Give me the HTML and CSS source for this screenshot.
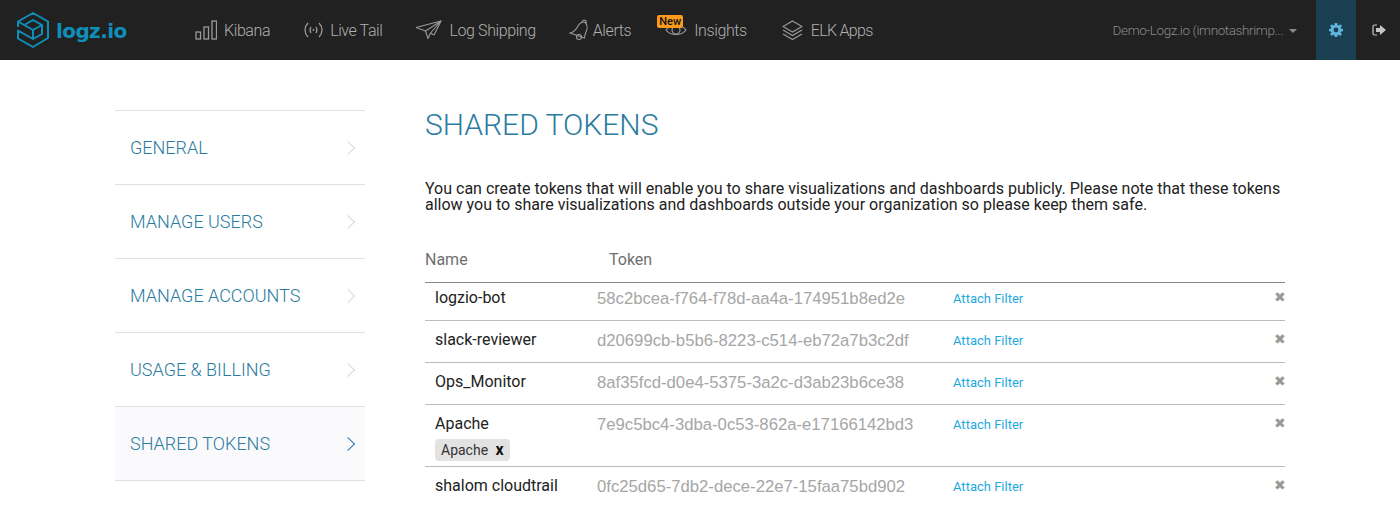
FILE: index.html
```html
<!DOCTYPE html>
<html lang="en">

<head>
    <meta charset="UTF-8">
    <meta name="viewport" content="width=device-width, initial-scale=1.0">
    <title>Shared Tokens</title>
    <link rel="stylesheet" href="styles.css">
</head>

<body>
    <header class="topbar">
        <a class="logo" href="#">
            <svg width="32" height="36" viewBox="0 0 32 36" fill="none" stroke="#0f8fb8" stroke-width="2" stroke-linejoin="round">
                <path d="M1 15V9.500L16 1 31 9.500V26L16 35 1 26.500V18.500L16 27 25 22V13L16 8 8 12.500" />
                <path d="M1 9.500 16 18 25 13" />
                <path d="M16 18V27" />
            </svg>
            <span class="logo-text">logz.io</span>
        </a>

        <nav class="mainnav">
            <a class="navitem nav-kibana" href="#">
                <svg width="22" height="20" viewBox="0 0 22 20" fill="none" stroke="#9a9a9a" stroke-width="1.300">
                    <rect x="1" y="12" width="4.500" height="7" />
                    <rect x="9" y="7" width="4.500" height="12" />
                    <rect x="17" y="1" width="4.500" height="18" />
                </svg>
                Kibana
            </a>
            <a class="navitem nav-tail" href="#">
                <svg width="21" height="18" viewBox="0 0 21 18" fill="none" stroke="#9a9a9a" stroke-width="1.300">
                    <path d="M5 2C1 6 1 12 5 16" />
                    <path d="M16 2C20 6 20 12 16 16" />
                    <path d="M8 6C6.800 8 6.800 10 8 12" />
                    <path d="M13 6C14.200 8 14.200 10 13 12" />
                    <circle cx="10.500" cy="9" r="0.900" fill="#9a9a9a" stroke="none" />
                </svg>
                Live Tail
            </a>
            <a class="navitem nav-ship" href="#">
                <svg width="27" height="20" viewBox="0 0 27 20" fill="none" stroke="#9a9a9a" stroke-width="1.100" stroke-linejoin="round">
                    <path d="M1 7.500 26 1 19 15 15.500 13" />
                    <path d="M1 7.500 10.500 11 26 1 15.500 13 13 18.500 10.500 11" />
                </svg>
                Log Shipping
            </a>
            <a class="navitem nav-alerts" href="#">
                <svg width="19" height="22" viewBox="0 0 19 22" fill="none" stroke="#9a9a9a" stroke-width="1.100">
                    <path d="M1 14C6 13 8 9 9 7 11 3 15 2 16.500 4 18.500 6 18.500 10 17 13 16 15.500 15.500 17 15.500 19Z" />
                    <path d="M13 3.500C13 1.500 15 .5 16.500 1.500 17.800 2.500 17.500 4 16.500 4.500" />
                    <circle cx="10" cy="18" r="2.500" />
                </svg>
                Alerts
            </a>
            <a class="navitem nav-insights" href="#">
                <span class="badge-new">New</span>
                <svg width="22" height="16" viewBox="0 0 22 16" fill="none" stroke="#9a9a9a" stroke-width="1.200">
                    <path d="M1 8C5 2 17 2 21 8 17 14 5 14 1 8Z" />
                    <circle cx="11" cy="8" r="4" />
                </svg>
                Insights
            </a>
            <a class="navitem nav-apps" href="#">
                <svg width="21" height="21" viewBox="0 0 21 21" fill="none" stroke="#9a9a9a" stroke-width="1.200">
                    <path d="M10.500 1 20 6.500 10.500 12 1 6.500Z" />
                    <path d="M1 10 10.500 15.500 20 10" />
                    <path d="M1 14 10.500 19.500 20 14" />
                </svg>
                ELK Apps
            </a>
        </nav>

        <div class="account">Demo-Logz.io (imnotashrimp...<span class="caret"></span></div>
        <a class="settings" href="#">
            <svg width="14" height="14" viewBox="0 0 14 14">
                <path fill="#5db4dc" fill-rule="evenodd" d="M5.700 0H8.300L8.600 1.900 9.800 2.400 11.400 1.300 13 3 11.700 4.500 12.200 5.700 14 6V8.200L12.200 8.500 11.700 9.700 12.900 11.200 11.200 12.900 9.700 11.700 8.500 12.200 8.300 14H5.700L5.400 12.200 4.200 11.700 2.800 12.900 1.100 11.200 2.300 9.700 1.800 8.500 0 8.200V6L1.800 5.700 2.300 4.500 1.100 3 2.700 1.300 4.200 2.400 5.400 1.900ZM7 4.600A2.400 2.400 0 1 0 7 9.400 2.400 2.400 0 0 0 7 4.600Z" />
            </svg>
        </a>
        <a class="logout" href="#">
            <svg width="14" height="12" viewBox="0 0 14 12">
                <path fill="none" stroke="#c4c4c4" stroke-width="1.200" d="M5 1H2.500C1.500 1 1 1.600 1 2.500V9.500C1 10.400 1.500 11 2.500 11H5" />
                <path fill="#c4c4c4" d="M4 4H8V1L14 6 8 11V8H4Z" />
            </svg>
        </a>
    </header>

    <div class="page">
        <aside class="sidemenu">
            <a class="sideitem" href="#">GENERAL<span class="chev"></span></a>
            <a class="sideitem" href="#">MANAGE USERS<span class="chev"></span></a>
            <a class="sideitem" href="#">MANAGE ACCOUNTS<span class="chev"></span></a>
            <a class="sideitem" href="#">USAGE &amp; BILLING<span class="chev"></span></a>
            <a class="sideitem active" href="#">SHARED TOKENS<span class="chev"></span></a>
        </aside>

        <main class="content">
            <h1>SHARED TOKENS</h1>
            <p class="intro">You can create tokens that will enable you to share visualizations and dashboards publicly. Please note that these tokens allow you to share visualizations and dashboards outside your organization so please keep them safe.</p>

            <div class="tablehead">
                <span class="head-name">Name</span>
                <span>Token</span>
            </div>

            <div class="row first">
                <div class="cell-name">logzio-bot</div>
                <div class="cell-token">58c2bcea-f764-f78d-aa4a-174951b8ed2e</div>
                <a class="cell-filter" href="#">Attach Filter</a>
                <span class="cell-del">&#10006;</span>
            </div>
            <div class="row">
                <div class="cell-name">slack-reviewer</div>
                <div class="cell-token">d20699cb-b5b6-8223-c514-eb72a7b3c2df</div>
                <a class="cell-filter" href="#">Attach Filter</a>
                <span class="cell-del">&#10006;</span>
            </div>
            <div class="row">
                <div class="cell-name">Ops_Monitor</div>
                <div class="cell-token">8af35fcd-d0e4-5375-3a2c-d3ab23b6ce38</div>
                <a class="cell-filter" href="#">Attach Filter</a>
                <span class="cell-del">&#10006;</span>
            </div>
            <div class="row">
                <div class="cell-name">Apache
                    <div class="tag">Apache <b>x</b></div>
                </div>
                <div class="cell-token">7e9c5bc4-3dba-0c53-862a-e17166142bd3</div>
                <a class="cell-filter" href="#">Attach Filter</a>
                <span class="cell-del">&#10006;</span>
            </div>
            <div class="row">
                <div class="cell-name">shalom cloudtrail</div>
                <div class="cell-token">0fc25d65-7db2-dece-22e7-15faa75bd902</div>
                <a class="cell-filter" href="#">Attach Filter</a>
                <span class="cell-del">&#10006;</span>
            </div>
        </main>
    </div>
</body>

</html>
```

FILE: styles.css
```css
/* General Styles */
html,
body {
    height: 100%;
    overflow: hidden;
}

body {
    font-family: Roboto, "Liberation Sans", sans-serif;
    background-color: #fff;
    color: #222;
    margin: 0;
}

a {
    text-decoration: none;
}

/* Top bar */
.topbar {
    display: flex;
    align-items: center;
    height: 60px;
    background: #212121;
}

.logo {
    display: flex;
    align-items: center;
    width: 195px;
    padding-left: 17px;
    box-sizing: border-box;
}

.logo-text {
    margin-left: 7px;
    margin-top: 1px;
    font-family: "DejaVu Sans", sans-serif;
    font-weight: bold;
    font-size: 20px;
    letter-spacing: -0.6px;
    color: #0f8fb8;
}

.mainnav {
    display: flex;
    align-items: center;
}

.navitem {
    position: relative;
    display: flex;
    align-items: center;
    gap: 7px;
    font-size: 16px;
    letter-spacing: -0.4px;
    font-weight: 300;
    color: #b0b0b0;
}

.nav-tail {
    margin-left: 33px;
    gap: 6px;
}

.nav-ship {
    margin-left: 33px;
    gap: 7px;
}

.nav-alerts {
    margin-left: 33px;
    gap: 5px;
}

.nav-insights {
    margin-left: 34px;
}

.nav-apps {
    margin-left: 35px;
    gap: 8px;
    letter-spacing: -0.7px;
}

.badge-new {
    position: absolute;
    left: -8px;
    top: -6px;
    padding: 0 2px;
    font-size: 11px;
    letter-spacing: 0;
    line-height: 13px;
    font-weight: 500;
    color: #111;
    background: #fb9a1b;
    border-radius: 2px;
}

.account {
    margin-left: auto;
    font-size: 13.5px;
    letter-spacing: -0.4px;
    font-weight: 300;
    color: #8a8a8a;
}

.caret {
    display: inline-block;
    margin-left: 6px;
    vertical-align: middle;
    border-left: 4px solid transparent;
    border-right: 4px solid transparent;
    border-top: 4px solid #8a8a8a;
}

.settings {
    display: flex;
    align-items: center;
    justify-content: center;
    width: 40px;
    height: 60px;
    margin-left: 19px;
    background: #1a3f50;
}

.logout {
    display: flex;
    justify-content: center;
    width: 44px;
    padding-left: 1px;
    box-sizing: border-box;
}

/* Page layout */
.page {
    display: flex;
    padding: 50px 115px 0;
}

.sidemenu {
    width: 250px;
    flex-shrink: 0;
    border-top: 1px solid #e0e0e8;
}

.sideitem {
    display: flex;
    align-items: center;
    justify-content: space-between;
    height: 73px;
    padding: 0 12px 0 15px;
    border-bottom: 1px solid #e0e0e8;
    font-size: 18px;
    font-weight: 300;
    color: #2a7ba0;
}

.sideitem.active {
    background: #fafafd;
}

.chev {
    width: 10px;
    height: 10px;
    border-top: 1.500px solid #d5d8de;
    border-right: 1.500px solid #d5d8de;
    box-sizing: border-box;
    transform: rotate(45deg);
}

.sideitem.active .chev {
    border-color: #2a7ba0;
}

/* Main content */
.content {
    flex: 1;
    min-width: 0;
    margin-left: 60px;
}

h1 {
    margin: -3px 0 0;
    font-size: 30px;
    line-height: 36px;
    font-weight: 300;
    color: #2a7ba0;
}

.intro {
    margin: 38px 0 0;
    font-size: 16px;
    line-height: 16px;
    color: #222;
}

.tablehead {
    display: flex;
    margin-top: 37px;
    padding-bottom: 13px;
    font-size: 16px;
    line-height: 19px;
    color: #707070;
    border-bottom: 1px solid #888;
}

.head-name {
    width: 184px;
}

.row {
    display: flex;
    align-items: flex-start;
    padding: 9px 0 11px;
    line-height: 21px;
    border-bottom: 1px solid #bbb;
    font-size: 16px;
}

.row.first {
    padding-top: 5px;
}

.cell-name {
    width: 172px;
    box-sizing: border-box;
    margin-top: -1px;
    padding-left: 10px;
    color: #222;
}

.cell-token {
    width: 356px;
    color: #a6a6a6;
    font-family: "Liberation Sans", sans-serif;
    font-size: 16.7px;
}

.cell-filter {
    font-size: 13px;
    color: #1fa8e0;
}

.cell-del {
    margin-left: auto;
    margin-top: -1px;
    margin-right: -1px;
    font-size: 14px;
    color: #999;
}

/* Filter tag */
.tag {
    width: fit-content;
    margin: 5px 0 -6px;
    padding: 0 6px 0 6px;
    font-size: 14px;
    line-height: 22px;
    color: #333;
    background: #e2e2e2;
    border-radius: 4px;
}

.tag b {
    margin-left: 4px;
    font-size: 16px;
    font-weight: bold;
    color: #111;
}
```
